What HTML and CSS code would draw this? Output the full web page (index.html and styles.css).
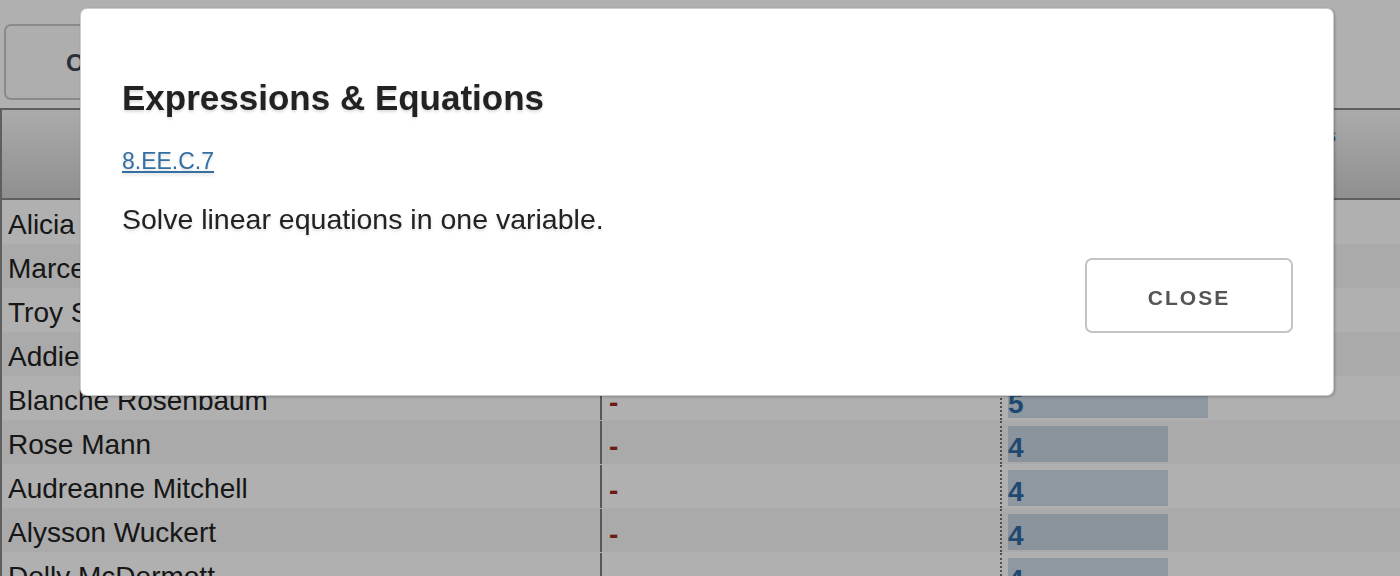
FILE: index.html
```html
<!DOCTYPE html>
<html lang="en">
<head>
<meta charset="utf-8">
<title>Standards report</title>
<link rel="stylesheet" href="styles.css">
</head>
<body>
  <div class="page">
    <div class="toolbar">
      <button class="tab-btn">OVERVIEW</button>
    </div>
    <div class="table">
      <div class="thead">
        <div class="th th-name"></div>
        <div class="th th-mid"></div>
        <div class="th th-score">Attempts</div>
      </div>
      <div class="row"><div class="cell name">Alicia Schowalter</div><div class="cell mid"><span class="dash">-</span></div><div class="cell score"><div class="bar" style="width:200px">5</div></div></div>
      <div class="row alt"><div class="cell name">Marcella Kuhn</div><div class="cell mid"><span class="dash">-</span></div><div class="cell score"><div class="bar" style="width:200px">5</div></div></div>
      <div class="row"><div class="cell name">Troy Schmitt</div><div class="cell mid"><span class="dash">-</span></div><div class="cell score"><div class="bar" style="width:200px">5</div></div></div>
      <div class="row alt"><div class="cell name">Addie Bergstrom</div><div class="cell mid"><span class="dash">-</span></div><div class="cell score"><div class="bar" style="width:200px">5</div></div></div>
      <div class="row"><div class="cell name">Blanche Rosenbaum</div><div class="cell mid"><span class="dash">-</span></div><div class="cell score"><div class="bar" style="width:200px">5</div></div></div>
      <div class="row alt"><div class="cell name">Rose Mann</div><div class="cell mid"><span class="dash">-</span></div><div class="cell score"><div class="bar" style="width:160px">4</div></div></div>
      <div class="row"><div class="cell name">Audreanne Mitchell</div><div class="cell mid"><span class="dash">-</span></div><div class="cell score"><div class="bar" style="width:160px">4</div></div></div>
      <div class="row alt"><div class="cell name">Alysson Wuckert</div><div class="cell mid"><span class="dash">-</span></div><div class="cell score"><div class="bar" style="width:160px">4</div></div></div>
      <div class="row"><div class="cell name">Dolly McDermott</div><div class="cell mid"></div><div class="cell score"><div class="bar" style="width:160px">4</div></div></div>
    </div>
  </div>

  <div class="backdrop"></div>
  <div class="modal">
    <div class="modal-body">
      <h2 class="modal-title">Expressions &amp; Equations</h2>
      <a class="std-link" href="#">8.EE.C.7</a>
      <p class="std-desc">Solve linear equations in one variable.</p>
    </div>
    <div class="modal-footer">
      <button class="close-btn">CLOSE</button>
    </div>
  </div>
</body>
</html>
```

FILE: styles.css
```css
* { box-sizing: border-box; }

html, body {
  margin: 0;
  padding: 0;
  background: #ffffff;
  font-family: "Liberation Sans", Arial, Helvetica, sans-serif;
  color: #262626;
  overflow: hidden;
  height: 576px;
}

.page {
  width: 1400px;
}

.toolbar {
  padding: 24px 4px 8px;
  display: flex;
}

.tab-btn {
  height: 76px;
  padding: 2px 60px 0;
  border: 2px solid #c8c8c8;
  border-radius: 7px;
  background: #fdfdfd;
  font-family: inherit;
  font-weight: bold;
  font-size: 24px;
  letter-spacing: 2px;
  color: #3b4452;
}

.table {
  border-left: 2px solid #8a8a8a;
}

.thead {
  display: grid;
  grid-template-columns: 598px 400px 400px;
  height: 92px;
  border-top: 2px solid #8a8a8a;
  border-bottom: 2px solid #8a8a8a;
  background: linear-gradient(to bottom, #f8f8f8, #d0d0d0);
}

.th-score {
  text-align: right;
  padding: 14px 64px 0 0;
  font-weight: bold;
  font-size: 20px;
  color: #2d6ba2;
}

.row {
  display: grid;
  grid-template-columns: 598px 400px 400px;
  height: 44px;
  background: #ffffff;
  border-top: 1px solid #ffffff;
}

.row.alt {
  background: #f6f6f6;
  border-top-color: #fbfbfb;
}

.cell {
  height: 43px;
}

.name {
  padding: 3px 0 0 6px;
  font-size: 28px;
  line-height: 42px;
  white-space: nowrap;
  color: #222;
}

.mid {
  border-left: 2px solid #7e7e7e;
  padding: 4px 0 0 7px;
}

.dash {
  font-weight: bold;
  font-size: 28px;
  line-height: 44px;
  color: #a0291a;
}

.score {
  border-left: 2px dotted #707070;
  padding: 5px 0 0 6px;
}

.bar {
  height: 36px;
  padding-top: 2px;
  background: rgba(100, 140, 180, 0.3);
  font-weight: bold;
  font-size: 28px;
  line-height: 40px;
  color: #2d6ba2;
}

.backdrop {
  position: fixed;
  inset: 0;
  background: rgba(0, 0, 0, 0.31);
}

.modal {
  position: fixed;
  left: 80px;
  top: 8px;
  width: 1254px;
  height: 388px;
  background: #ffffff;
  border: 1px solid rgba(0, 0, 0, 0.2);
  border-radius: 7px;
  box-shadow: 1px 1px 3px rgba(0, 0, 0, 0.25);
  display: flex;
  flex-direction: column;
}

.modal-body {
  padding: 69px 42px 0 41px;
  text-shadow: 0 2px 3px rgba(0, 0, 0, 0.14);
}

.modal-title {
  margin: 0;
  font-size: 35px;
  line-height: 40px;
  font-weight: bold;
  color: #222;
}

.std-link {
  display: inline-block;
  margin-top: 30px;
  font-size: 23px;
  line-height: 26px;
  color: #336fa3;
  text-decoration: underline;
}

.std-desc {
  margin: 29px 0 0;
  font-size: 28.5px;
  line-height: 32px;
  color: #222;
}

.modal-footer {
  display: flex;
  justify-content: flex-end;
  padding: 23px 40px 0;
}

.close-btn {
  width: 208px;
  height: 75px;
  border: 2px solid #c4c4c4;
  border-radius: 7px;
  background: #ffffff;
  font-family: inherit;
  font-weight: bold;
  font-size: 21px;
  letter-spacing: 2px;
  color: #555555;
  padding: 4px 0 0 0;
}
```
